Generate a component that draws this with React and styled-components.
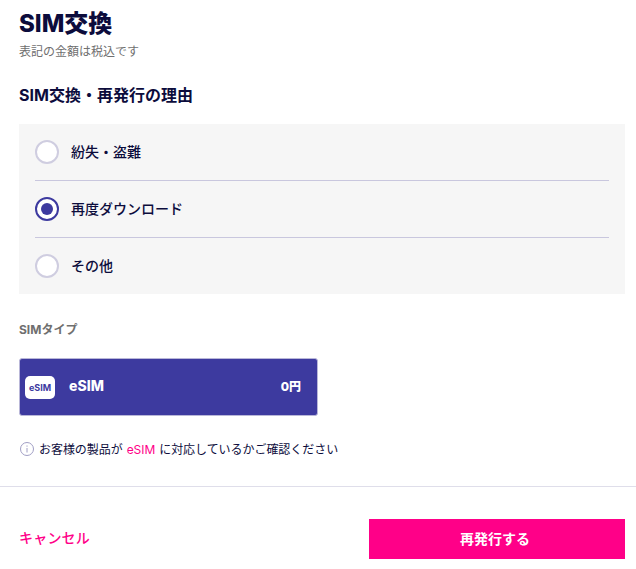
import React from 'react';
import styled, { createGlobalStyle } from 'styled-components';

const GlobalStyle = createGlobalStyle`
  html, body {
    margin: 0;
    padding: 0;
    background: #ffffff;
  }
  body {
    font-family: Inter, "Noto Sans CJK JP", sans-serif;
    color: #0c0c3c;
    overflow: hidden;
  }
`;

const Page = styled.div`
  width: 636px;
  height: 569px;
  display: flex;
  flex-direction: column;
`;

const Content = styled.div`
  padding: 8px 11px 0 19px;
`;

const Title = styled.h1`
  margin: 0;
  font-size: 24px;
  line-height: 32px;
  font-weight: 800;
`;

const Note = styled.p`
  margin: 3px 0 0;
  font-size: 12px;
  line-height: 18px;
  color: #6f6f6f;
`;

const Heading = styled.h2`
  margin: 22px 0 0;
  font-size: 16px;
  line-height: 24px;
  font-weight: 700;
`;

const ReasonList = styled.div`
  margin-top: 17px;
  background: #f6f6f6;
  padding: 0 16px;
  height: 170px;
  display: flex;
  flex-direction: column;
`;

const Reason = styled.label`
  flex: 1;
  display: flex;
  align-items: center;
  gap: 12px;
  font-size: 14px;
  font-weight: 500;
  border-top: ${(p) => (p.$first ? 'none' : '1px solid #c9c7de')};
`;

const ReasonText = styled.span`
  padding-bottom: 2px;
`;

const Radio = styled.span`
  width: 24px;
  height: 24px;
  box-sizing: border-box;
  border-radius: 50%;
  background: #ffffff;
  border: 2px solid ${(p) => (p.$checked ? '#3d3a9f' : '#cfcde0')};
  display: flex;
  align-items: center;
  justify-content: center;
  &::after {
    content: '';
    display: ${(p) => (p.$checked ? 'block' : 'none')};
    width: 12px;
    height: 12px;
    border-radius: 50%;
    background: #3d3a9f;
  }
`;

const TypeLabel = styled.div`
  margin-top: 27px;
  font-size: 12px;
  line-height: 18px;
  font-weight: 700;
  color: #6f6f6f;
`;

const SimCard = styled.div`
  margin-top: 19px;
  width: 299px;
  height: 58px;
  box-sizing: border-box;
  background: #3d3a9f;
  border: 1px solid #b9b7d8;
  border-radius: 3px;
  padding: 0 16px 0 5px;
  display: flex;
  align-items: center;
  color: #ffffff;
  font-weight: 800;
`;

const SimBadge = styled.span`
  width: 30px;
  height: 23px;
  background: #ffffff;
  border-radius: 5px;
  color: #3d3a9f;
  font-size: 9px;
  font-weight: 700;
  display: flex;
  align-items: center;
  justify-content: center;
`;

const SimName = styled.span`
  margin-left: 14px;
  padding-bottom: 4px;
  font-size: 14px;
`;

const SimPrice = styled.span`
  margin-left: auto;
  padding-bottom: 4px;
  font-size: 12px;
`;

const Notice = styled.div`
  margin-top: 25px;
  display: flex;
  align-items: center;
  gap: 5px;
  font-size: 12px;
  line-height: 18px;
  letter-spacing: -0.05px;
`;

const NoticeIcon = styled.svg`
  margin: 0 0 2px 1px;
`;

const Accent = styled.span`
  color: #ff0088;
  margin: 0 4px;
`;

const Footer = styled.div`
  margin-top: 27px;
  border-top: 1px solid #dfdeea;
  padding: 32px 11px 0 19px;
  display: flex;
  align-items: center;
  justify-content: space-between;
`;

const CancelLink = styled.a`
  padding-bottom: 4px;
  color: #ff0088;
  font-size: 14px;
  font-weight: 500;
  letter-spacing: 0.2px;
`;

const SubmitButton = styled.button`
  width: 256px;
  height: 40px;
  border: none;
  padding: 0 4px 3px 0;
  background: #ff0088;
  color: #ffffff;
  font-family: inherit;
  font-size: 14px;
  font-weight: 700;
`;

const InfoIcon = () => (
  <NoticeIcon width="14" height="14" viewBox="0 0 14 14" fill="none" stroke="#a09ec4">
    <circle cx="7" cy="7" r="6.5" />
    <path d="M7 6v4.5M7 3.5v1.2" />
  </NoticeIcon>
);

const reasons = [
  { label: '紛失・盗難' },
  { label: '再度ダウンロード', checked: true },
  { label: 'その他' },
];

export default function App() {
  return (
    <Page>
      <GlobalStyle />
      <Content>
        <Title>SIM交換</Title>
        <Note>表記の金額は税込です</Note>
        <Heading>SIM交換・再発行の理由</Heading>
        <ReasonList>
          {reasons.map((r, i) => (
            <Reason key={r.label} $first={i === 0}>
              <Radio $checked={r.checked} />
              <ReasonText>{r.label}</ReasonText>
            </Reason>
          ))}
        </ReasonList>
        <TypeLabel>SIMタイプ</TypeLabel>
        <SimCard>
          <SimBadge>eSIM</SimBadge>
          <SimName>eSIM</SimName>
          <SimPrice>0円</SimPrice>
        </SimCard>
        <Notice>
          <InfoIcon />
          <span>
            お客様の製品が<Accent>eSIM</Accent>に対応しているかご確認ください
          </span>
        </Notice>
      </Content>
      <Footer>
        <CancelLink>キャンセル</CancelLink>
        <SubmitButton>再発行する</SubmitButton>
      </Footer>
    </Page>
  );
}
